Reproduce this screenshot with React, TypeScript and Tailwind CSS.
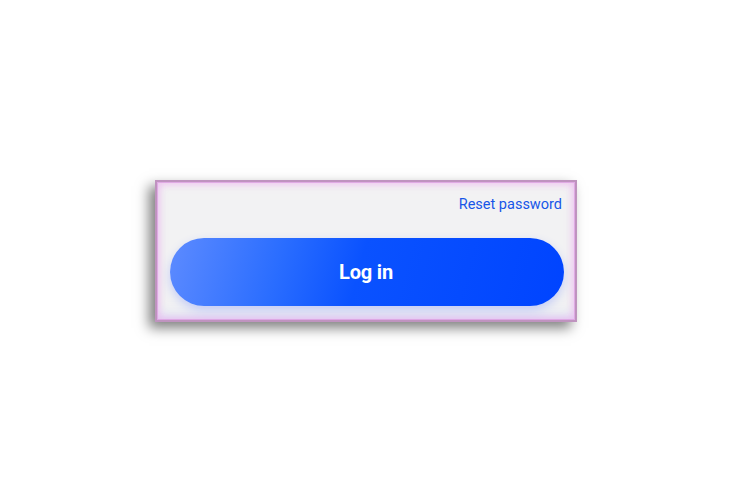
import React from "react";

export default function App() {
  return (
    <div className="w-[734px] h-[500px] bg-white flex items-start justify-center" style={{ fontFamily: "Roboto, 'Liberation Sans', sans-serif" }}>
      <div className="mt-[180px] ml-[-2px] w-[422px] h-[142px] bg-[#f2f2f3] border-2 border-[#bf93bf] shadow-[inset_0_0_0_1px_rgba(220,160,225,0.8),inset_0_0_7px_3px_rgba(236,170,236,0.6),inset_0_-10px_14px_-6px_rgba(170,190,255,0.35),-6px_6px_12px_rgba(0,0,0,0.5)] flex flex-col pl-[13px] pr-[11px]">
        <div className="flex justify-end pt-[14px] pr-[2px]">
          <span className="text-[14.5px] leading-[18px] text-[#1756e8]">Reset password</span>
        </div>
        <button className="mt-[24px] h-[68px] w-full rounded-full bg-[linear-gradient(105deg,#5d8bff_0%,#2a6dff_28%,#0a52ff_48%,#0044ff_100%)] shadow-[0_4px_10px_rgba(60,90,255,0.25)] flex items-center justify-center">
          <span className="text-white text-[20px] font-bold tracking-[-0.2px] mr-[2px]">Log in</span>
        </button>
      </div>
    </div>
  );
}
